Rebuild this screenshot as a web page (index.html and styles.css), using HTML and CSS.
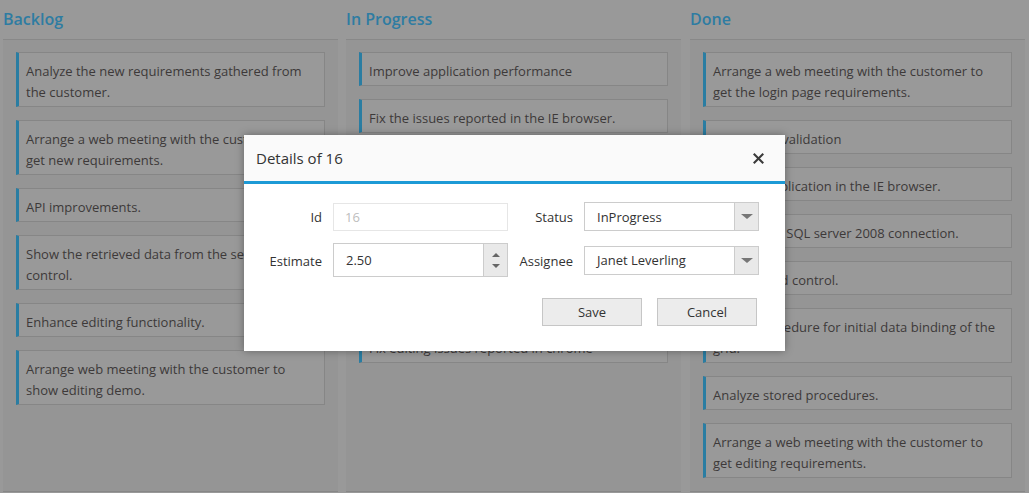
FILE: index.html
```html
<!DOCTYPE html>
<html lang="en">
<head>
<meta charset="utf-8">
<title>Kanban</title>
<link rel="stylesheet" href="styles.css">
</head>
<body>
<div class="board">
  <section class="column">
    <h2 class="column-header">Backlog</h2>
    <div class="column-body">
      <div class="card">Analyze the new requirements gathered from the customer.</div>
      <div class="card">Arrange a web meeting with the customer to get new requirements.</div>
      <div class="card">API improvements.</div>
      <div class="card">Show the retrieved data from the server in grid control.</div>
      <div class="card">Enhance editing functionality.</div>
      <div class="card">Arrange web meeting with the customer to show editing demo.</div>
    </div>
  </section>
  <section class="column">
    <h2 class="column-header">In Progress</h2>
    <div class="column-body">
      <div class="card">Improve application performance</div>
      <div class="card">Fix the issues reported in the IE browser.</div>
      <div class="card">Fix the issues reported by the customer.</div>
      <div class="card">Improve the performance of the editing functionality in the grid.</div>
      <div class="card">Analyze the customer requirements for the upcoming release.</div>
      <div class="card">Fix editing issues reported in chrome</div>
    </div>
  </section>
  <section class="column column-last">
    <h2 class="column-header">Done</h2>
    <div class="column-body">
      <div class="card">Arrange a web meeting with the customer to get the login page requirements.</div>
      <div class="card">Login page validation</div>
      <div class="card">Test the application in the IE browser.</div>
      <div class="card">Analyze the SQL server 2008 connection.</div>
      <div class="card">Test the grid control.</div>
      <div class="card">Stored procedure for initial data binding of the grid.</div>
      <div class="card">Analyze stored procedures.</div>
      <div class="card">Arrange a web meeting with the customer to get editing requirements.</div>
    </div>
  </section>
</div>

<div class="dialog" role="dialog">
  <div class="dialog-header">
    <span class="dialog-title">Details of 16</span>
    <span class="dialog-close">
      <svg width="11" height="11" viewBox="0 0 11 11"><path d="M1.5 1.5 L9.5 9.5 M9.5 1.5 L1.5 9.5" stroke="#3a3a3a" stroke-width="2.1" stroke-linecap="square" fill="none"/></svg>
    </span>
  </div>
  <div class="dialog-body">
    <div class="form-grid">
      <label class="form-label">Id</label>
      <div class="field field-disabled h28">16</div>
      <label class="form-label">Status</label>
      <div class="field h29">
        <span class="field-text">InProgress</span>
        <span class="field-btn"><span class="tri-down"></span></span>
      </div>
      <label class="form-label">Estimate</label>
      <div class="field h34">
        <span class="field-text">2.50</span>
        <span class="field-btn spin"><span class="tri-up small"></span><span class="tri-down small"></span></span>
      </div>
      <label class="form-label">Assignee</label>
      <div class="field h29">
        <span class="field-text">Janet Leverling</span>
        <span class="field-btn"><span class="tri-down"></span></span>
      </div>
    </div>
    <div class="dialog-footer">
      <button class="btn">Save</button>
      <button class="btn">Cancel</button>
    </div>
  </div>
</div>
</body>
</html>
```
FILE: styles.css
```css
html, body {
  margin: 0;
  padding: 0;
  background: #999999;
  font-family: "Open Sans", "Noto Sans", sans-serif;
  overflow: hidden;
}

.board {
  display: flex;
  gap: 8px;
  padding-left: 3px;
  height: 492px;
}

.column {
  width: 335px;
  display: flex;
  flex-direction: column;
  border-bottom: 1px solid #878787;
}

.column-last {
  margin-left: 1px;
}

.column-header {
  margin: 0;
  height: 39px;
  line-height: 38px;
  font-size: 16px;
  font-weight: 600;
  color: #2e7ca2;
  border-bottom: 1px solid #888888;
}

.column-body {
  flex: 1;
  background: #959595;
  padding: 12px 13px;
  display: flex;
  flex-direction: column;
  gap: 13px;
}

.card {
  background: #999999;
  border: 1px solid #868686;
  border-left: 3px solid #2a7da2;
  padding: 8px 7px 3px 7px;
  font-size: 13px;
  line-height: 21px;
  color: #3d3939;
}

.dialog {
  position: absolute;
  left: 244px;
  top: 135px;
  width: 541px;
  height: 216px;
  background: #ffffff;
  box-shadow: 0 0 8px rgba(0, 0, 0, 0.35);
}

.dialog-header {
  height: 46px;
  background: #fafafa;
  border-bottom: 3px solid #1d9ad6;
  display: flex;
  align-items: center;
  justify-content: space-between;
  padding: 0 21px 0 12px;
}

.dialog-title {
  font-size: 15px;
  color: #333333;
}

.dialog-close {
  display: flex;
  align-items: center;
}

.dialog-body {
  padding-top: 18px;
}

.form-grid {
  display: grid;
  grid-template-columns: 78px 175px 54px 175px;
  column-gap: 11px;
  row-gap: 12px;
  align-items: center;
}

.form-label {
  text-align: right;
  font-size: 13px;
  color: #333333;
  padding-top: 1px;
}

.field {
  box-sizing: border-box;
  border: 1px solid #cccccc;
  display: flex;
  align-items: stretch;
  font-size: 13px;
  color: #333333;
  background: #ffffff;
}

.h28 { height: 28px; }
.h29 { height: 29px; }
.h34 { height: 34px; }

.field-disabled {
  border-color: #e6e6e6;
  color: #bdbdbd;
  align-items: center;
  padding-left: 11px;
}

.field-text {
  flex: 1;
  display: flex;
  align-items: center;
  padding-left: 12px;
}

.field-btn {
  width: 23px;
  background: #e9e9e9;
  border-left: 1px solid #cccccc;
  display: flex;
  align-items: center;
  justify-content: center;
}

.field-btn.spin {
  flex-direction: column;
  gap: 7px;
}

.tri-down {
  width: 0;
  height: 0;
  border-left: 6px solid transparent;
  border-right: 6px solid transparent;
  border-top: 5px solid #777777;
}

.tri-up {
  width: 0;
  height: 0;
  border-left: 6px solid transparent;
  border-right: 6px solid transparent;
  border-bottom: 5px solid #777777;
}

.tri-up.small, .tri-down.small {
  border-left-width: 4px;
  border-right-width: 4px;
}
.tri-up.small { border-bottom-width: 4px; border-bottom-color: #666; }
.tri-down.small { border-top-width: 4px; border-top-color: #666; }

.dialog-footer {
  display: flex;
  justify-content: flex-end;
  gap: 15px;
  padding: 21px 28px 0 0;
}

.btn {
  width: 100px;
  height: 28px;
  background: #ececec;
  border: 1px solid #c6c6c6;
  font-family: "Open Sans", "Noto Sans", sans-serif;
  font-size: 13px;
  color: #333333;
  padding: 0;
}
```
